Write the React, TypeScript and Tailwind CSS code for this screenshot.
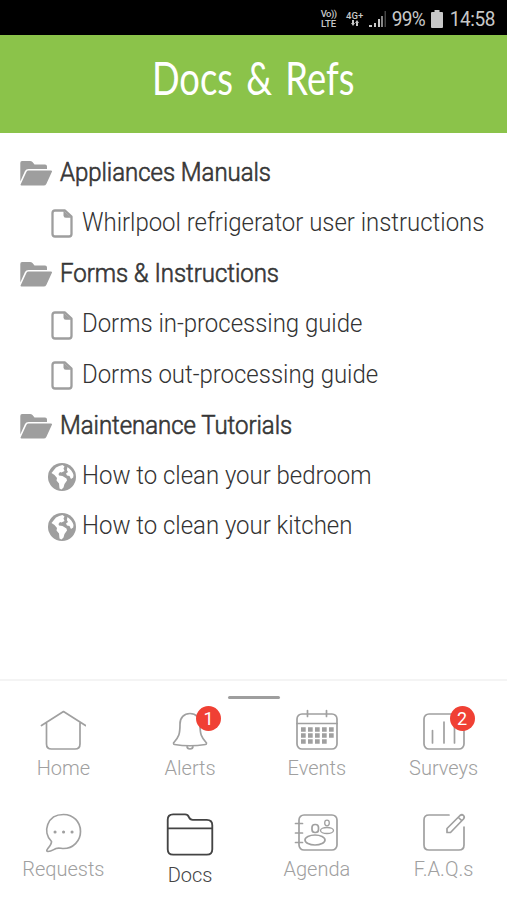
import type { ReactNode } from "react";

type DocItem = { label: string; kind: "file" | "web" };

const sections: { title: string; items: DocItem[] }[] = [
  {
    title: "Appliances Manuals",
    items: [{ label: "Whirlpool refrigerator user instructions", kind: "file" }],
  },
  {
    title: "Forms & Instructions",
    items: [
      { label: "Dorms in-processing guide", kind: "file" },
      { label: "Dorms out-processing guide", kind: "file" },
    ],
  },
  {
    title: "Maintenance Tutorials",
    items: [
      { label: "How to clean your bedroom", kind: "web" },
      { label: "How to clean your kitchen", kind: "web" },
    ],
  },
];

function FolderOpenIcon() {
  return (
    <svg width="32" height="25" viewBox="0 0 32 25" fill="#9e9e9e">
      <path d="M2 0h8q1.500 0 2.500 1l2 2.500h10.500q2 0 2 2V8H8.500Q6 8 5 10L.3 20.500V2Q.3 0 2 0z" />
      <path d="M8.500 9.500h22.500q1.500 0 .8 1.500l-5.500 12q-.8 1.500-2.500 1.500H1.500q-1.500 0-.7-1.500L6.500 10.800q.6-1.300 2-1.300z" />
    </svg>
  );
}

function FileIcon() {
  return (
    <svg width="22" height="29" viewBox="0 0 22 29" fill="none">
      <path
        d="M4 1.500h10l6.500 6v17.500q0 2.500-2.500 2.500H4Q1.500 27.500 1.500 25V4Q1.500 1.500 4 1.500z"
        stroke="#9e9e9e"
        strokeWidth="2.300"
        strokeLinejoin="round"
      />
      <path d="M12.500 1.500v5q0 2.300 2.300 2.300h5.700z" fill="#9e9e9e" />
    </svg>
  );
}

function GlobeIcon() {
  return (
    <svg width="28" height="28" viewBox="0 0 28 28">
      <circle cx="14" cy="14" r="14" fill="#9e9e9e" />
      <path
        d="M8 4.500q3-2 6.500-2.500l2 1.500-1 2 1 2.500-3 1.500-1.500-.5-1.500 2 .5 1.500 3.500.5 4 2.500.5 2-2.500 3.500-1 3.500-2 2-2-1-.5-5-2.500-3 .5-2.500L6.500 12l-3-2z"
        fill="#fff"
      />
      <path d="M19.500 4q4.500 3 6 8l-.3 2.500-2.200 1.500-1.500-3-2.500-.5-1-2 2-1.500-1.200-2z" fill="#fff" />
    </svg>
  );
}

function StatusBar() {
  return (
    <div className="h-[35px] bg-black text-[#c8c8c8] flex items-center justify-end pr-3 pt-0.5">
      <div className="w-[18px] flex flex-col items-center text-[9.500px] leading-[10px] font-medium mr-[8px]">
        <span className="tracking-[-0.5px]">Vo))</span>
        <span>LTE</span>
      </div>
      <div className="w-[18px] flex flex-col items-center mr-[5px]">
        <span className="text-[9.500px] leading-[9px] font-medium">4G+</span>
        <svg width="10" height="7" viewBox="0 0 10 7" fill="#c8c8c8">
          <path d="M2 0h2v3h1L3 6 1 3h1zM6 6h2V3h1L7 0 5 3h1z" />
        </svg>
      </div>
      <svg width="17" height="18" viewBox="0 0 17 18">
        <path d="M0 17v-2h3v2zM5 17v-4h2v4zM9 17V9h2v8z" fill="#c8c8c8" />
        <path d="M12 17V6h2v11z" fill="#888" />
        <path d="M15.500 17V1h1.500v16z" fill="#444" />
      </svg>
      <span className="w-[35px] text-[19px] leading-none tracking-[-0.6px] ml-[6px] scale-y-[1.1]">99%</span>
      <svg width="12" height="18" viewBox="0 0 12 18" className="ml-[4px] mr-[7px]" fill="#c8c8c8">
        <path d="M3.500 0h5v2H11q1 0 1 1v14q0 1-1 1H1q-1 0-1-1V3q0-1 1-1h2.500z" />
      </svg>
      <span className="text-[19px] leading-none tracking-[-0.4px] scale-y-[1.1]">14:58</span>
    </div>
  );
}

function NavIcon({ size = "w-[46px] h-[44px]", children }: { size?: string; children: ReactNode }) {
  return (
    <svg
      viewBox="0 0 46 44"
      className={size}
      fill="none"
      stroke="currentColor"
      strokeWidth="1.700"
      strokeLinecap="round"
      strokeLinejoin="round"
    >
      {children}
    </svg>
  );
}

function Badge({ count }: { count: number }) {
  return (
    <span className="absolute left-[29px] -top-[3px] w-[25px] h-[25px] rounded-full bg-[#f04034] text-white text-[18px] leading-[26px] text-center">
      {count}
    </span>
  );
}

const icons = {
  home: (
    <NavIcon>
      <path d="M1.500 16.500L23.500 2.500l22 14M6.500 14v21q0 5 5 5h23.500q5 0 5-5V14" />
    </NavIcon>
  ),
  alerts: (
    <NavIcon>
      <path d="M23 4.500c-6 0-10 4-10 10.500 0 10-1 13-6.500 19 0 1 0 1.500 1 1.500q15 2.500 31 0c1 0 1-.5 1-1.500-5.500-6-6.500-9-6.500-19 0-6.500-4-10.500-10-10.500zM20 37q0 3 3 3t3-3" />
    </NavIcon>
  ),
  events: (
    <NavIcon>
      <rect x="3" y="5" width="40" height="35" rx="5" />
      <path d="M3 14.500h40M13.500 1.500v6M32.500 1.500v6" />
      <path
        d="M7 20.500h33M7 26.500h33M7 32.500h26"
        strokeWidth="4.500"
        strokeDasharray="4.700 2.300"
        strokeLinecap="butt"
      />
    </NavIcon>
  ),
  surveys: (
    <NavIcon>
      <rect x="3" y="5" width="40" height="35" rx="5" />
      <path d="M11.500 21.500v12.500M23 13v21M33.500 17v17" />
    </NavIcon>
  ),
  requests: (
    <NavIcon>
      <path d="M11.500 31.500C2 22 7 4.500 23.500 4.500c10 0 17 7.500 17 17S33 38.500 23.500 38.500c-2.500 0-5-1-7.500 0s-4.500 3-8 3c-1.500 0-1.500-1.500-.5-2.500 2-2.500 4-4.500 4-7.500z" />
      <path d="M15 22h.1M23.500 22h.1M32 22h.1" strokeWidth="3" />
    </NavIcon>
  ),
  docs: (
    <NavIcon size="w-[50px] h-[48px]">
      <path d="M2.500 9q0-5 5-5h11q2.500 0 3.500 2.500 1 2.500 3.500 2.500h13q5 0 5 5v22q0 5-5 5H7.500q-5 0-5-5zM2.500 16.800h41" />
    </NavIcon>
  ),
  agenda: (
    <NavIcon>
      <rect x="5" y="5" width="38" height="35" rx="5" />
      <path d="M1.500 13.500h7M1.500 23h7M1.500 32.500h7" />
      <rect x="18" y="14.500" width="6.500" height="8" rx="3" />
      <ellipse cx="21" cy="30" rx="10" ry="5" />
      <ellipse cx="33" cy="13" rx="2.300" ry="2.800" strokeWidth="1.300" />
      <ellipse cx="33" cy="20.500" rx="6.500" ry="3" strokeWidth="1.300" />
    </NavIcon>
  ),
  faqs: (
    <NavIcon>
      <path d="M28 5H8Q3 5 3 10v25q0 5 5 5h30q5 0 5-5V17" />
      <path d="M26 22.500v-4L39 5.500q2-1.500 3.500 0t0 3.500L29.500 22.500zM37.500 7.500l3 3" />
    </NavIcon>
  ),
};

const navItems = [
  { label: "Home", icon: icons.home },
  { label: "Alerts", icon: icons.alerts, badge: 1 },
  { label: "Events", icon: icons.events },
  { label: "Surveys", icon: icons.surveys, badge: 2 },
  { label: "Requests", icon: icons.requests },
  { label: "Docs", icon: icons.docs, active: true },
  { label: "Agenda", icon: icons.agenda },
  { label: "F.A.Q.s", icon: icons.faqs },
];

export default function App() {
  return (
    <div className="w-[507px] h-[900px] flex flex-col bg-white overflow-hidden font-['Roboto',sans-serif]">
      <StatusBar />

      <header className="h-[98px] bg-[#8bc34a] flex justify-center pt-[15px]">
        <h1 className="text-white text-[46px] leading-[56px] font-['Lato',sans-serif] whitespace-nowrap [word-spacing:5px] scale-x-[0.79]">
          Docs &amp; Refs
        </h1>
      </header>

      <main className="flex-1 pt-[15px] text-[#333]">
        {sections.map((section) => (
          <section key={section.title}>
            <div className="h-[50.600px] flex items-center pl-5">
              <FolderOpenIcon />
              <h2 className="ml-2 pb-px text-[24px] font-light [-webkit-text-stroke:0.600px_#3a3a3a] tracking-[-0.04px] whitespace-nowrap scale-y-[1.06]">
                {section.title}
              </h2>
            </div>
            {section.items.map((item) => (
              <div key={item.label} className="h-[50.600px] flex items-center pl-12">
                <div className="w-7 flex justify-center">
                  {item.kind === "file" ? <FileIcon /> : <GlobeIcon />}
                </div>
                <span className="ml-1.5 pb-0.5 text-[24px] font-light tracking-[-0.03px] whitespace-nowrap scale-y-[1.06]">
                  {item.label}
                </span>
              </div>
            ))}
          </section>
        ))}
      </main>

      <nav className="h-[221px] border-t-2 border-[#f4f4f4] pt-[15px]">
        <div className="w-[52px] h-[3px] rounded-full bg-[#9e9e9e] mx-auto" />
        <div className="grid grid-cols-4 auto-rows-[101px] pt-[10px]">
          {navItems.map((item) => (
            <div
              key={item.label}
              className={`flex flex-col items-center ${item.active ? "text-[#444]" : "text-[#a0a0a0]"}`}
            >
              <div className="relative">
                {item.icon}
                {item.badge && <Badge count={item.badge} />}
              </div>
              <span className={`text-[20px] leading-[24px] font-light ${item.active ? "mt-[5px]" : "mt-[3px]"}`}>
                {item.label}
              </span>
            </div>
          ))}
        </div>
      </nav>
    </div>
  );
}
